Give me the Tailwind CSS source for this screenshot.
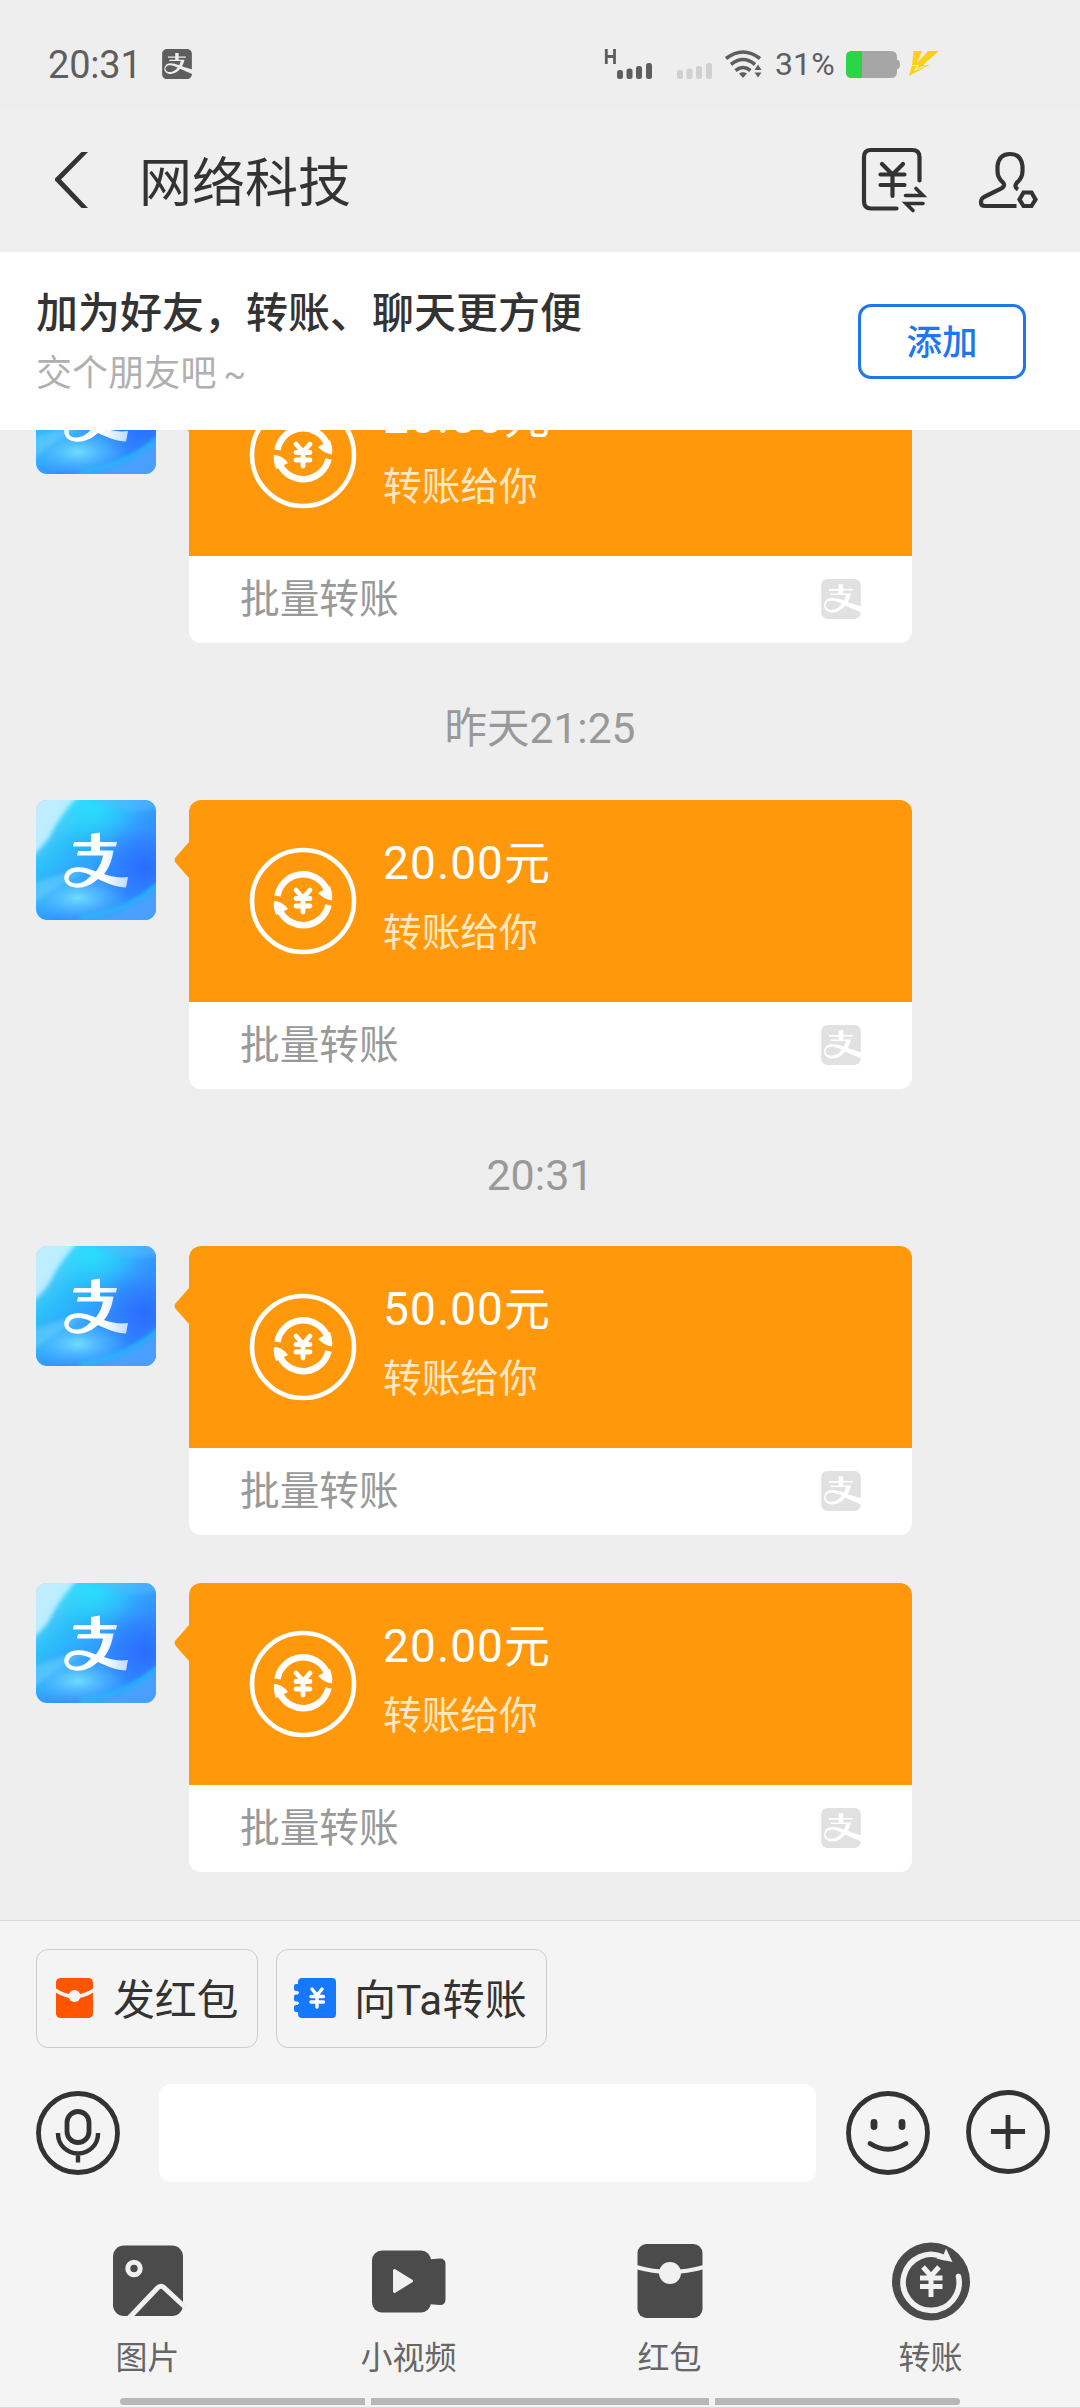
<!DOCTYPE html>
<html lang="zh-CN">
<head>
<meta charset="utf-8">
<title>网络科技</title>
<script src="https://cdn.jsdelivr.net/npm/@tailwindcss/browser@4"></script>
</head>
<body class="w-[1080px] h-[2408px] overflow-hidden bg-[#eeeeee] font-[Roboto,'Noto_Sans_CJK_SC',sans-serif] text-[#333333]">
<svg class="absolute size-0">
  <defs>
    <linearGradient id="sky" x1="0" y1="0" x2="1" y2="1">
      <stop offset="0" stop-color="#7fdcff"/><stop offset=".3" stop-color="#2cc0fb"/><stop offset=".6" stop-color="#3391ff"/><stop offset="1" stop-color="#2f86ff"/>
    </linearGradient>
    <linearGradient id="shine" x1="0" y1="0" x2=".8" y2=".4">
      <stop offset="0" stop-color="#bfeaff"/><stop offset="1" stop-color="#d8f8ff" stop-opacity=".75"/>
    </linearGradient>
    <radialGradient id="deep" cx=".5" cy=".5" r=".5"><stop offset="0" stop-color="#2a6cff"/><stop offset="1" stop-color="#2a6cff" stop-opacity="0"/></radialGradient>
    <radialGradient id="glow" cx=".5" cy=".5" r=".5"><stop offset="0" stop-color="#6fdcff"/><stop offset="1" stop-color="#4fc4ff" stop-opacity="0"/></radialGradient>
    <radialGradient id="cyan" cx=".5" cy=".5" r=".5"><stop offset="0" stop-color="#2bdcfb"/><stop offset="1" stop-color="#2bdcfb" stop-opacity="0"/></radialGradient>
    <linearGradient id="tail" x1="0" y1="0" x2="1" y2="0"><stop offset="0" stop-color="#fff"/><stop offset=".6" stop-color="#fff"/><stop offset="1" stop-color="#bfdcff"/></linearGradient>
    <filter id="soft" x="-20%" y="-20%" width="140%" height="140%"><feGaussianBlur stdDeviation="2"/></filter>
  </defs>
  <symbol id="alipay" viewBox="0.1 0 23.8 24">
    <path d="M19.695 15.07c3.426 1.158 4.203 1.22 4.203 1.22V3.846c0-2.124-1.705-3.845-3.81-3.845H3.914C1.808.001.102 1.722.102 3.846v16.31c0 2.123 1.706 3.845 3.813 3.845h16.173c2.105 0 3.81-1.722 3.81-3.845v-.157s-6.19-2.602-9.315-4.119c-2.096 2.602-4.8 4.181-7.607 4.181-4.75 0-6.361-4.19-4.112-6.949.49-.602 1.324-1.175 2.617-1.497 2.025-.502 5.247.313 8.266 1.317a16.796 16.796 0 0 0 1.341-3.302H5.781v-.952h4.799V6.975H4.77v-.953h5.81V3.591s0-.409.411-.409h2.347v2.84h5.744v.951h-5.744v1.704h4.69a19.453 19.453 0 0 1-1.986 5.06c1.424.52 2.702 1.011 3.654 1.333m-13.81-2.032c-.596.06-1.71.325-2.321.869-1.83 1.608-.735 4.55 2.968 4.55 2.151 0 4.301-1.388 5.99-3.61-2.403-1.182-4.438-2.028-6.637-1.809" fill="currentColor"/>
  </symbol>
  <symbol id="avatar" viewBox="0 0 120 120">
    <rect width="120" height="120" fill="url(#sky)"/>
    <ellipse cx="55" cy="8" rx="50" ry="34" fill="url(#cyan)"/>
    <ellipse cx="108" cy="68" rx="46" ry="40" fill="url(#deep)"/>
    <ellipse cx="42" cy="98" rx="50" ry="24" fill="url(#glow)"/>
    <path d="M-4-4H42Q22 18 14 36Q8 46-4 56Z" fill="url(#shine)" filter="url(#soft)"/>
    <path d="M-4 84Q30 70 60 68Q25 80-4 106Z" fill="#8be0ff" opacity=".35" filter="url(#soft)"/>
    <path d="M60 0Q90 18 124 8V-4H60Z" fill="#5ab8ff" opacity=".5" filter="url(#soft)"/>
    <path d="M20 124Q90 118 124 82V124Z" fill="#4fa6ff" opacity=".8" filter="url(#soft)"/>
    <path d="M44 118Q90 112 122 84" fill="none" stroke="#22c4f6" stroke-width="3" filter="url(#soft)"/>
    <path d="M55 34L64 32.500V42H81L80 46.500H64V50.500H77.500C76 60 73 68 68 74C76 77 84 78 92 77L90 87.500C81 87 72 84 62 79C54 86 46 88.500 39 87.500C26 86 25 73 35 68.500C43 65.500 52 68 60 71.500C64 66 66 61 67 55.500H41L42 51H55V46.500H37L38 42H55ZM55 75.500C46 71 38 70.500 34 75C30 80 35 84 41 83.500C47 83 51 80 55 75.500Z" fill="url(#tail)" fill-rule="evenodd"/>
  </symbol>
  <symbol id="coin" viewBox="0 0 108 108">
    <g fill="none" stroke="#fff">
      <circle cx="54" cy="54" r="51" stroke-width="4.600"/>
      <path d="M28.500 49A26 26 0 0 1 78 43" stroke-width="6.500"/>
      <path d="M79.500 58A26 26 0 0 1 31 64" stroke-width="6.500"/>
      <path d="M47 43L54 51L61 43M54 51V65M47 51.500H61M47 59H61" stroke-width="4.800" stroke-linecap="round"/>
    </g>
    <path d="M69 46L81 39Q84 47 83 53.500Q76 53 69 46Z M39 62L27 68Q24 60 25 54Q33 54 39 62Z" fill="#fff"/>
  </symbol>
</svg>

<div class="flex h-full flex-col">
  <!-- status bar -->
  <header class="flex h-[108px] shrink-0 items-center pl-[48px] pt-[20px] text-[#5e5e5e]">
    <span class="w-[114px] pt-[2px] text-[38px] leading-none tracking-[-0.2px]">20:31</span>
    <svg class="size-[30px]"><use href="#alipay"/></svg>
    <svg class="ml-[412px] h-[34px] w-[110px]" viewBox="604 46 110 34">
      <path d="M606.300 48V63M614.500 48V63M606 55.500H615" stroke="#5e5e5e" stroke-width="2.800" fill="none"/>
      <g fill="#5e5e5e"><rect x="617" y="69" width="6" height="9" rx="2.500"/><rect x="626.500" y="67.500" width="6" height="10.500" rx="2.500"/><rect x="636" y="65" width="6" height="13" rx="2.500"/><rect x="646" y="62" width="6" height="16" rx="2.500"/></g>
      <g fill="#d0d0d0"><rect x="677" y="69" width="6" height="9" rx="2.500"/><rect x="686.500" y="67.500" width="6" height="10.500" rx="2.500"/><rect x="696" y="65" width="6" height="13" rx="2.500"/><rect x="706" y="62" width="6" height="16" rx="2.500"/></g>
    </svg>
    <svg class="ml-[10px] h-[30px] w-[40px]" viewBox="724 49 40 30" fill="none" stroke="#5e5e5e" stroke-width="3.600">
      <path d="M726 58.500Q743 45.500 760 58.500M731 64.500Q743 54.500 755 64.500M735.500 70.500Q743 64.500 750.500 70.500"/>
      <path d="M739 73.500Q743 71 747 73.500L743 78ZM754.500 70L758 64.500L761.500 70ZM754.500 72.500L758 77.500L761.500 72.500Z" fill="#5e5e5e" stroke="none"/>
    </svg>
    <span class="ml-[11px] w-[71px] text-[32px] leading-none tracking-[0.1px]">31%</span>
    <svg class="h-[27px] w-[94px]" viewBox="846 51 94 27">
      <path d="M852 51H891Q897 51 897 57V60H898.500Q900 61 900 64.500T898.500 69H897V72Q897 78 891 78H852Q846 78 846 72V57Q846 51 852 51Z" fill="#a6a6a6"/>
      <path d="M862 51V78H852Q846 78 846 72V57Q846 51 852 51Z" fill="#29d645"/>
      <path d="M913.500 51H922L917 63L928 51H939L923 65H929.500L909 76L912 65Z" fill="#fdd017"/>
      <path d="M911 65.500H918L915 70L926 65.500" fill="none" stroke="#fbf0c4" stroke-width="1.200"/>
    </svg>
  </header>

  <!-- title bar -->
  <nav class="flex h-[144px] shrink-0 items-center bg-[#efefef] pl-[54px]">
    <svg class="h-[56px] w-[36px]" viewBox="54 152 36 56"><path d="M81.500 152H88L61 179.500L88 208H81.500L55 180.500V178.500Z" fill="#333"/></svg>
    <h1 class="ml-[49px] w-[721px] pt-[8px] text-[53px] leading-none">网络科技</h1>
    <svg class="h-[68px] w-[68px]" viewBox="861 146 68 68" fill="none" stroke="#333" stroke-width="4.200" stroke-linecap="round">
      <path d="M897.500 208.500H872Q865 208.500 865 201.500V157Q865 150 872 150H913Q920.500 150 920.500 157V180.500"/>
      <path d="M883 164L893.500 174.500L904 164M893.500 174.500V196M881.500 174.500H905.500M881.500 185H905.500" />
      <path d="M906.500 195.500H924L917 188.500M924 203.500H907L914 210.500" stroke-width="3.600"/>
    </svg>
    <svg class="ml-[49px] h-[60px] w-[64px]" viewBox="978 150 64 60" fill="none" stroke="#333" stroke-width="4.200">
      <path d="M1017.500 206H986Q982 206 982 202.500C982 199 983 198 986 196.500L1001.500 189Q1007 186 1004 182.500Q998.500 178 998.500 171V166Q1000 154 1011 154T1023.500 166V171Q1023.500 178 1018 182.500Q1014.500 187 1019 189.500"/>
      <path d="M1024.500 192.500H1032.500L1036.500 199.500L1032.500 206H1024.500L1020.500 199.500Z"/>
    </svg>
  </nav>

  <!-- add-friend banner -->
  <section class="flex h-[178px] shrink-0 items-center justify-between bg-white pl-[36px] pr-[54px]">
    <div class="flex flex-col gap-[21px] pt-[3px]">
      <p class="text-[42px] leading-none font-medium">加为好友，转账、聊天更方便</p>
      <p class="text-[36px] leading-none tracking-[0.1px] text-[#b0b0b0]">交个朋友吧<span class="ml-[7px] text-[33px]">~</span></p>
    </div>
    <button class="flex h-[75px] w-[168px] items-center justify-center rounded-[13px] border-[3px] border-[#1f77ee] pt-[5px] text-[35.500px] leading-none font-medium text-[#1f77ee]">添加</button>
  </section>

  <!-- conversation -->
  <main class="h-[1490px] shrink-0 overflow-hidden">
    <div class="-mt-[76px] flex flex-col pl-[36px]">
      <article class="flex h-[289px] items-start">
        <svg class="size-[120px] rounded-[11px]"><use href="#avatar"/></svg>
        <svg class="ml-[18px] mt-[42px] h-[36px] w-[15px]" viewBox="0 0 15 36"><path d="M15 0L1 16Q0 18 1 20L15 36Z" fill="#ff980a"/></svg>
        <div class="w-[723px] overflow-hidden rounded-[12px] bg-white">
          <div class="flex h-[202px] bg-[#ff980a] pl-[60px] pt-[47px]">
            <svg class="size-[108px]"><use href="#coin"/></svg>
            <div class="ml-[26px] flex flex-col gap-[28px]"><p class="-mt-[7px] text-[46px] leading-none tracking-[1.1px] text-white">20.00元</p><p class="text-[38.700px] leading-none text-[#ffe7c2]">转账给你</p></div>
          </div>
          <div class="flex h-[87px] items-center justify-between pl-[51px] pr-[51px]"><p class="text-[39.700px] leading-none text-[#999]">批量转账</p><svg class="-mt-[1px] size-[40px] text-[#e1e1e1]"><use href="#alipay"/></svg></div>
        </div>
      </article>
      <time class="-ml-[36px] flex h-[157px] items-center justify-center pt-[15px] text-[42.500px] leading-none text-[#999]">昨天21:25</time>
      <article class="flex h-[289px] items-start">
        <svg class="size-[120px] rounded-[11px]"><use href="#avatar"/></svg>
        <svg class="ml-[18px] mt-[42px] h-[36px] w-[15px]" viewBox="0 0 15 36"><path d="M15 0L1 16Q0 18 1 20L15 36Z" fill="#ff980a"/></svg>
        <div class="w-[723px] overflow-hidden rounded-[12px] bg-white">
          <div class="flex h-[202px] bg-[#ff980a] pl-[60px] pt-[47px]">
            <svg class="size-[108px]"><use href="#coin"/></svg>
            <div class="ml-[26px] flex flex-col gap-[28px]"><p class="-mt-[7px] text-[46px] leading-none tracking-[1.1px] text-white">20.00元</p><p class="text-[38.700px] leading-none text-[#ffe7c2]">转账给你</p></div>
          </div>
          <div class="flex h-[87px] items-center justify-between pl-[51px] pr-[51px]"><p class="text-[39.700px] leading-none text-[#999]">批量转账</p><svg class="-mt-[1px] size-[40px] text-[#e1e1e1]"><use href="#alipay"/></svg></div>
        </div>
      </article>
      <time class="-ml-[36px] flex h-[157px] items-center justify-center pt-[15px] text-[43px] leading-none text-[#999]">20:31</time>
      <article class="flex h-[289px] items-start">
        <svg class="size-[120px] rounded-[11px]"><use href="#avatar"/></svg>
        <svg class="ml-[18px] mt-[42px] h-[36px] w-[15px]" viewBox="0 0 15 36"><path d="M15 0L1 16Q0 18 1 20L15 36Z" fill="#ff980a"/></svg>
        <div class="w-[723px] overflow-hidden rounded-[12px] bg-white">
          <div class="flex h-[202px] bg-[#ff980a] pl-[60px] pt-[47px]">
            <svg class="size-[108px]"><use href="#coin"/></svg>
            <div class="ml-[26px] flex flex-col gap-[28px]"><p class="-mt-[7px] text-[46px] leading-none tracking-[1.1px] text-white">50.00元</p><p class="text-[38.700px] leading-none text-[#ffe7c2]">转账给你</p></div>
          </div>
          <div class="flex h-[87px] items-center justify-between pl-[51px] pr-[51px]"><p class="text-[39.700px] leading-none text-[#999]">批量转账</p><svg class="-mt-[1px] size-[40px] text-[#e1e1e1]"><use href="#alipay"/></svg></div>
        </div>
      </article>
      <article class="mt-[48px] flex h-[289px] items-start">
        <svg class="size-[120px] rounded-[11px]"><use href="#avatar"/></svg>
        <svg class="ml-[18px] mt-[42px] h-[36px] w-[15px]" viewBox="0 0 15 36"><path d="M15 0L1 16Q0 18 1 20L15 36Z" fill="#ff980a"/></svg>
        <div class="w-[723px] overflow-hidden rounded-[12px] bg-white">
          <div class="flex h-[202px] bg-[#ff980a] pl-[60px] pt-[47px]">
            <svg class="size-[108px]"><use href="#coin"/></svg>
            <div class="ml-[26px] flex flex-col gap-[28px]"><p class="-mt-[7px] text-[46px] leading-none tracking-[1.1px] text-white">20.00元</p><p class="text-[38.700px] leading-none text-[#ffe7c2]">转账给你</p></div>
          </div>
          <div class="flex h-[87px] items-center justify-between pl-[51px] pr-[51px]"><p class="text-[39.700px] leading-none text-[#999]">批量转账</p><svg class="-mt-[1px] size-[40px] text-[#e1e1e1]"><use href="#alipay"/></svg></div>
        </div>
      </article>
    </div>
  </main>

  <!-- composer -->
  <footer class="flex h-[488px] shrink-0 flex-col border-t border-b border-[#dadada] bg-[#f4f4f4]">
    <div class="flex gap-[18px] pl-[36px] pt-[28px]">
      <button class="flex h-[99px] w-[222px] items-center rounded-[12px] border border-[#cccccc] pl-[19px] text-[42px] leading-none">
        <svg class="mt-[-2px] h-[40px] w-[37px]" viewBox="0 0 37 40"><rect width="37" height="40" rx="4.500" fill="#ff5500"/><path d="M-1 12Q18.500 25 38 12" fill="none" stroke="#f4f4f4" stroke-width="3.400"/><circle cx="18.500" cy="18" r="6" fill="#f4f4f4"/></svg>
        <span class="ml-[20px] whitespace-nowrap pt-[5px] tracking-[-0.3px]">发红包</span>
      </button>
      <button class="flex h-[99px] w-[271px] items-center rounded-[12px] border border-[#cccccc] pl-[17px] text-[42px] leading-none">
        <svg class="mt-[-2px] h-[40px] w-[42px]" viewBox="0 0 42 40"><rect x="4" width="38" height="40" rx="4" fill="#1677ff"/><g fill="#1677ff"><rect y="6" width="8" height="7" rx="2"/><rect y="16.500" width="8" height="7" rx="2"/><rect y="27" width="8" height="7" rx="2"/></g><path d="M4 14.800H4.200M4 25.200H4.200" stroke="#f4f4f4" stroke-width="2" stroke-linecap="round"/><path d="M18 11L23 17.500L28 11M23 17.500V29M17 18.500H29.500M17 24H29.500" fill="none" stroke="#fff" stroke-width="3.400" stroke-linecap="round"/></svg>
        <span class="ml-[18px] whitespace-nowrap pt-[5px] tracking-[0.3px]">向Ta转账</span>
      </button>
    </div>
    <div class="mt-[36px] flex h-[98px] items-center pl-[36px]">
      <svg class="size-[84px]" viewBox="0 0 84 84" fill="none" stroke="#333" stroke-width="4.800"><circle cx="42" cy="42" r="39.500"/><rect x="31" y="20.500" width="22" height="31" rx="11"/><path d="M22 42V43A20 19.500 0 0 0 62 43V42M42 62.500V71.500" stroke-width="4.400"/></svg>
      <div class="ml-[39px] h-[98px] w-[657px] rounded-[12px] bg-white"></div>
      <svg class="ml-[30px] size-[84px]" viewBox="0 0 84 84" fill="none" stroke="#333" stroke-width="4.800" stroke-linecap="round"><circle cx="42" cy="42" r="39.500"/><path d="M28 31.500V35.500M56 31.500V35.500" stroke-width="6.800"/><path d="M24 52.500Q42 64 60 52.500"/></svg>
      <svg class="-mt-[2px] ml-[36px] size-[84px]" viewBox="0 0 84 84" fill="none" stroke="#333" stroke-width="4.800"><circle cx="42" cy="42" r="39.500"/><path d="M42 25V59M25 41.500H59"/></svg>
    </div>
    <div class="mt-[57px] grid grid-cols-4 pl-[17px] pr-[19px] text-center text-[32px] leading-none text-[#666]">
      <div class="flex flex-col items-center gap-[19px]">
        <svg class="size-[84px]" viewBox="0 0 84 84"><rect x="7" y="6.500" width="70" height="70.500" rx="11" fill="#4b4b4b"/><circle cx="28" cy="29.500" r="6.200" fill="none" stroke="#f1f1f1" stroke-width="5"/><path d="M22 80L51 49.500Q55 45 59 49.500L80 69" fill="none" stroke="#f1f1f1" stroke-width="5"/></svg>
        <span>图片</span>
      </div>
      <div class="flex flex-col items-center gap-[19px]">
        <svg class="size-[84px]" viewBox="0 0 84 84"><rect x="5" y="11.500" width="59" height="62" rx="10" fill="#4b4b4b"/><path d="M60 20.500L73 19.500Q78.500 19.500 78.500 25V60Q78.500 66 73 66L60 65Z" fill="#4b4b4b"/><path d="M27.500 31.500L44.500 42L27.500 52.500Z" fill="#f1f1f1" stroke="#f1f1f1" stroke-width="3" stroke-linejoin="round"/></svg>
        <span>小视频</span>
      </div>
      <div class="flex flex-col items-center gap-[19px]">
        <svg class="size-[84px]" viewBox="0 0 84 84"><rect x="9.500" y="5" width="65" height="74" rx="9" fill="#4b4b4b"/><path d="M8 28Q42 38 76 28" fill="none" stroke="#f1f1f1" stroke-width="4"/><circle cx="42" cy="34" r="11" fill="#f1f1f1"/></svg>
        <span>红包</span>
      </div>
      <div class="flex flex-col items-center gap-[19px]">
        <svg class="size-[84px]" viewBox="0 0 84 84"><circle cx="42" cy="42.500" r="39" fill="#4b4b4b"/><path d="M69.500 37.500A28 28 0 1 1 55 18.500" fill="none" stroke="#f1f1f1" stroke-width="5.600" stroke-linecap="round"/><path d="M57 9.500L63.500 23L47 19.500L54 17Z" fill="#f1f1f1"/><path d="M34 28L42 37L50 28M42 36V58M31 39H53.500M31 47.500H53.500" fill="none" stroke="#f1f1f1" stroke-width="5"/></svg>
        <span>转账</span>
      </div>
    </div>
    <div class="mt-[24px] flex gap-[6px] pl-[120px]">
      <i class="h-[7px] w-[245px] rounded-l-full bg-[#b8b8b8]"></i><i class="h-[7px] w-[338px] bg-[#b8b8b8]"></i><i class="h-[7px] w-[245px] rounded-r-full bg-[#b8b8b8]"></i>
    </div>
  </footer>
</div>
</body>
</html>
